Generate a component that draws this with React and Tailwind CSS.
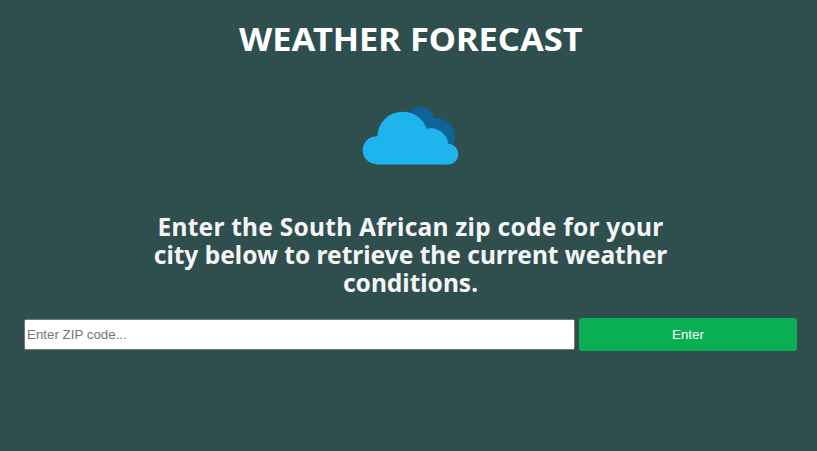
function Cloud() {
  return (
    <svg className="block h-20 w-[120px]" viewBox="0 0 360 240" aria-hidden="true">
      <g fill="#0e6399">
        <circle cx="212" cy="74" r="39" />
        <circle cx="261" cy="124" r="54" />
        <path d="M175 90h80v80h-80z" />
      </g>
      <g fill="#1eb5ee">
        <circle cx="80" cy="165.500" r="42" />
        <circle cx="158" cy="126" r="76" />
        <circle cx="243" cy="152" r="52" />
        <circle cx="294" cy="177.500" r="31" />
        <path d="M80 130h163v40h51v38.500H80z" />
      </g>
    </svg>
  );
}

export default function App() {
  return (
    <main className="flex h-[451px] w-[817px] flex-col items-center overflow-hidden bg-[#2f4f4f] pl-1 font-['Noto_Sans',sans-serif]">
      <h1 className="mt-[19px] h-10 scale-x-[1.075] whitespace-nowrap text-[32px] leading-10 font-bold text-white">
        WEATHER FORECAST
      </h1>
      <div className="mt-9 mr-0.5">
        <Cloud />
      </div>
      <h2 className="mt-[38px] text-center text-[24.500px] leading-7 font-bold whitespace-nowrap text-[#f5f5f5]">
        <span className="tracking-[0.25px]">Enter the South African zip code for your</span>
        <br />
        city below to retrieve the current weather
        <br />
        conditions.
      </h2>
      <form className="mt-[21px] flex w-[773px] items-center gap-1 font-['Liberation_Sans',Arial,sans-serif] text-[13.333px]">
        <input
          className="h-[31px] w-[551px] rounded-[2px] border border-[#767676] bg-white px-0.5 py-0 placeholder:text-[#757575]"
          placeholder="Enter ZIP code..."
        />
        <button type="button" className="h-[33px] w-[218px] rounded-[3px] bg-[#0aaf54] text-white">
          Enter
        </button>
      </form>
    </main>
  );
}
